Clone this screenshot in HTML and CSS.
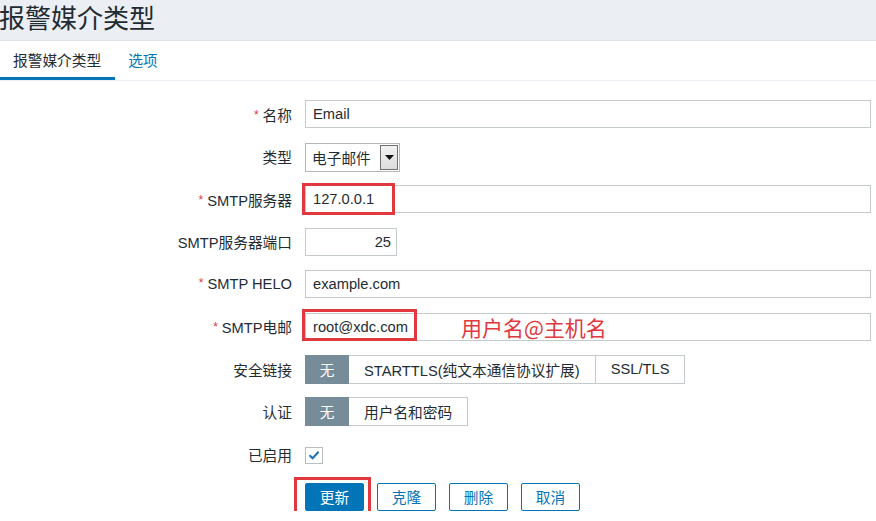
FILE: index.html
```html
<!DOCTYPE html>
<html lang="zh-CN">
<head>
<meta charset="utf-8">
<title>报警媒介类型</title>
<link rel="stylesheet" href="styles.css">
</head>
<body>
<div class="header"><h1 class="title">报警媒介类型</h1></div>
<div class="tabs">
  <a class="tab active">报警媒介类型</a>
  <a class="tab">选项</a>
</div>
<div class="form">
  <div class="row">
    <div class="lbl"><span class="req">*</span>名称</div>
    <div class="field"><div class="input wide">Email</div></div>
  </div>
  <div class="row">
    <div class="lbl">类型</div>
    <div class="field">
      <div class="select"><span class="select-text">电子邮件</span><span class="select-btn"><svg width="9" height="5" viewBox="0 0 9 5"><path d="M0 0H9L4.5 5Z" fill="#111"/></svg></span></div>
    </div>
  </div>
  <div class="row">
    <div class="lbl"><span class="req">*</span>SMTP服务器</div>
    <div class="field">
      <div class="input wide">127.0.0.1</div>
      <div class="mark mark-server"></div>
    </div>
  </div>
  <div class="row">
    <div class="lbl">SMTP服务器端口</div>
    <div class="field"><div class="input port">25</div></div>
  </div>
  <div class="row">
    <div class="lbl"><span class="req">*</span>SMTP HELO</div>
    <div class="field"><div class="input wide">example.com</div></div>
  </div>
  <div class="row">
    <div class="lbl"><span class="req">*</span>SMTP电邮</div>
    <div class="field">
      <div class="input wide">root@xdc.com</div>
      <div class="mark mark-email"></div>
      <div class="note">用户名@主机名</div>
    </div>
  </div>
  <div class="row">
    <div class="lbl">安全链接</div>
    <div class="field">
      <div class="seg"><span class="seg-item on">无</span><span class="seg-item">STARTTLS(纯文本通信协议扩展)</span><span class="seg-item">SSL/TLS</span></div>
    </div>
  </div>
  <div class="row">
    <div class="lbl">认证</div>
    <div class="field">
      <div class="seg"><span class="seg-item on">无</span><span class="seg-item">用户名和密码</span></div>
    </div>
  </div>
  <div class="row">
    <div class="lbl">已启用</div>
    <div class="field">
      <span class="check"><svg width="12" height="10" viewBox="0 0 12 10"><path d="M1.5 5.2L4.6 8.2L10.6 1.8" fill="none" stroke="#1f6fb2" stroke-width="2"/></svg></span>
    </div>
  </div>
  <div class="row">
    <div class="lbl"></div>
    <div class="field buttons">
      <span class="btn primary">更新</span>
      <span class="btn">克隆</span>
      <span class="btn">删除</span>
      <span class="btn">取消</span>
      <div class="mark mark-btn"></div>
    </div>
  </div>
</div>
</body>
</html>
```
FILE: styles.css
```css
html, body {
  margin: 0;
  padding: 0;
  background: #ffffff;
  font-family: "Liberation Sans", "Noto Sans CJK SC", sans-serif;
  font-size: 14.7px;
  color: #1f2c33;
}

.header {
  height: 40px;
  background: #ebeef2;
  border-bottom: 1px solid #dde2e6;
}

.title {
  margin: 0;
  padding: 0;
  font-size: 26px;
  font-weight: normal;
  line-height: 38px;
  color: #1f2c33;
  margin-left: -1px;
}

.tabs {
  display: flex;
  height: 39px;
  border-bottom: 1px solid #ebeef2;
}

.tab {
  display: flex;
  align-items: center;
  padding: 0 13px;
  height: 36px;
  border-bottom: 3px solid transparent;
  color: #0275b8;
}

.tab.active {
  color: #1f2c33;
  border-bottom-color: #0275b8;
  padding-right: 14px;
}

.form {
  padding-top: 19px;
  display: flex;
  flex-direction: column;
  gap: 14.5px;
}

.row {
  display: grid;
  grid-template-columns: 292px 566px;
  column-gap: 13px;
  height: 28px;
  align-items: center;
}

.lbl {
  text-align: right;
  white-space: nowrap;
}

.req {
  color: #e0383e;
  font-size: 12px;
  vertical-align: 2px;
  margin-right: 4px;
}

.field {
  position: relative;
  display: flex;
  align-items: center;
  height: 28px;
}

.input {
  box-sizing: border-box;
  height: 28px;
  border: 1px solid #c4c9cc;
  background: #fff;
  padding: 0 7px;
  display: flex;
  align-items: center;
  white-space: nowrap;
}

.input.wide {
  width: 566px;
}

.input.port {
  width: 92px;
  justify-content: flex-end;
  padding-right: 5px;
}

.select {
  box-sizing: border-box;
  width: 95px;
  height: 29px;
  border: 1px solid #b4b8bb;
  background: #fff;
  display: flex;
  align-items: center;
  padding-left: 6px;
  margin-top: 1px;
}

.select-text {
  flex: 1;
  white-space: nowrap;
}

.select-btn {
  box-sizing: border-box;
  width: 18px;
  height: 25px;
  margin-right: 1px;
  border: 1px solid #707070;
  background: linear-gradient(#f2f2f2, #dcdcdc);
  display: flex;
  align-items: center;
  justify-content: center;
}

.seg {
  display: flex;
  height: 29px;
}

.seg-item {
  box-sizing: border-box;
  height: 29px;
  display: flex;
  align-items: center;
  padding: 0 15px;
  border: 1px solid #c4c9cc;
  border-left: none;
  background: #fff;
  white-space: nowrap;
}

.seg-item:first-child {
  border-left: 1px solid #c4c9cc;
}

.seg-item.on {
  background: #768d99;
  border-color: #768d99;
  color: #fff;
  width: 44px;
  justify-content: center;
  padding: 0;
}

.check {
  box-sizing: border-box;
  width: 18px;
  height: 17px;
  border: 1px solid #b8bec2;
  background: #fff;
  display: flex;
  align-items: center;
  justify-content: center;
  margin-top: 2px;
}

.buttons {
  gap: 13px;
}

.btn {
  box-sizing: border-box;
  height: 28px;
  width: 59px;
  display: flex;
  align-items: center;
  justify-content: center;
  border: 1px solid #0275b8;
  border-radius: 2px;
  background: #fff;
  color: #0275b8;
}

.btn.primary {
  background: #0275b8;
  color: #fff;
}

.mark {
  position: absolute;
  box-sizing: border-box;
  border: 3px solid #e0383e;
  pointer-events: none;
}

.mark-server {
  left: -3px;
  top: -2px;
  width: 93px;
  height: 32px;
}

.mark-email {
  left: -3px;
  top: -4px;
  width: 115px;
  height: 32px;
}

.mark-btn {
  left: -11px;
  top: -6px;
  width: 77px;
  height: 38px;
}

.note {
  position: absolute;
  left: 156px;
  top: 1px;
  font-family: "Noto Sans CJK SC", sans-serif;
  font-size: 21px;
  line-height: 26px;
  letter-spacing: 0;
  color: #e0383e;
  white-space: nowrap;
}
```
